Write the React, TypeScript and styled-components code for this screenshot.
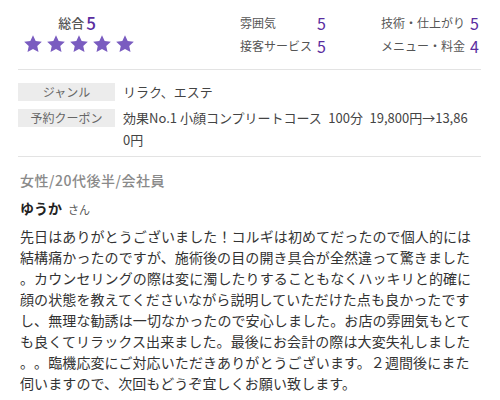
import styled, { createGlobalStyle } from 'styled-components';

const GlobalStyle = createGlobalStyle`
  html, body {
    margin: 0;
    padding: 0;
    background: #ffffff;
  }
  body {
    font-family: "Noto Sans CJK JP", "Noto Sans", sans-serif;
    color: #333333;
    text-spacing-trim: space-all;
  }
`;

const RATINGS = [
  { label: '雰囲気', value: 5 },
  { label: '技術・仕上がり', value: 5 },
  { label: '接客サービス', value: 5 },
  { label: 'メニュー・料金', value: 4 },
];

// 参照画面と同じ位置で改行する
const BODY_LINES = [
  '先日はありがとうございました！コルギは初めてだったので個人的には',
  '結構痛かったのですが、施術後の目の開き具合が全然違って驚きました',
  '。カウンセリングの際は変に濁したりすることもなくハッキリと的確に',
  '顔の状態を教えてくださいながら説明していただけた点も良かったです',
  'し、無理な勧誘は一切なかったので安心しました。お店の雰囲気もとて',
  'も良くてリラックス出来ました。最後にお会計の際は大変失礼しました',
  '。。臨機応変にご対応いただきありがとうございます。２週間後にまた',
  '伺いますので、次回もどうぞ宜しくお願い致します。',
];

const Star = () => (
  <svg width="20" height="20" viewBox="0 0 24 24">
    <polygon
      fill="#7a5cc0"
      points="12,1.5 15.2,8.3 22.6,9.2 17.1,14.3 18.6,21.7 12,18 5.4,21.7 6.9,14.3 1.4,9.2 8.8,8.3"
    />
  </svg>
);

const App = () => {
  return (
    <Page>
      <GlobalStyle />
      <TopRow>
        <ScoreBlock>
          <TotalLine>
            総合<TotalValue>5</TotalValue>
          </TotalLine>
          <Stars>
            {[0, 1, 2, 3, 4].map((i) => (
              <Star key={i} />
            ))}
          </Stars>
        </ScoreBlock>
        <RatingGrid>
          {RATINGS.map((r) => (
            <RatingItem key={r.label}>
              <RatingLabel>{r.label}</RatingLabel>
              <RatingValue>{r.value}</RatingValue>
            </RatingItem>
          ))}
        </RatingGrid>
      </TopRow>

      <InfoTable>
        <InfoRow>
          <InfoLabel>ジャンル</InfoLabel>
          <InfoValue>リラク、エステ</InfoValue>
        </InfoRow>
        <InfoRow>
          <InfoLabel>予約クーポン</InfoLabel>
          <InfoValue>
            効果No.1 小顔コンプリートコース{'\u2002'}100分{'\u2002'}19,800円→13,86
            <br />0円
          </InfoValue>
        </InfoRow>
      </InfoTable>

      <Review>
        <Meta>女性/20代後半/会社員</Meta>
        <Author>
          ゆうか<Honorific>さん</Honorific>
        </Author>
        <Body>
          {BODY_LINES.map((line, i) => (
            <BodyLine key={i}>{line}</BodyLine>
          ))}
        </Body>
      </Review>
    </Page>
  );
};

const Page = styled.div`
  width: 500px;
  height: 400px;
  overflow: hidden;
  padding: 0 19px 0 18px;
  box-sizing: border-box;
`;

const TopRow = styled.div`
  display: flex;
  height: 70px;
  box-sizing: border-box;
  border-bottom: 1px solid #e3e3e3;
`;

const ScoreBlock = styled.div`
  width: 118px;
  display: flex;
  flex-direction: column;
  align-items: center;
  padding-top: 11px;
`;

const TotalLine = styled.div`
  height: 22px;
  display: flex;
  align-items: center;
  font-size: 13px;
  color: #555555;
  font-weight: 500;
`;

const TotalValue = styled.span`
  margin-left: 2px;
  font-size: 17px;
  color: #5a2d9f;
`;

const Stars = styled.div`
  display: flex;
  gap: 3px;
  margin-top: 1px;
  margin-left: 3px;
  svg {
    display: block;
  }
`;

const RatingGrid = styled.div`
  margin-left: 104px;
  padding-top: 11px;
  display: grid;
  grid-template-columns: 141px auto;
  grid-auto-rows: 23px;
  align-content: start;
`;

const RatingItem = styled.div`
  display: flex;
  align-items: center;
  &:nth-child(odd) span:first-child {
    width: 77px;
  }
  &:nth-child(even) span:first-child {
    width: 89px;
  }
`;

const RatingLabel = styled.span`
  font-size: 12px;
  color: #555555;
  white-space: nowrap;
`;

const RatingValue = styled.span`
  font-size: 16px;
  color: #5a2d9f;
`;

const InfoTable = styled.div`
  display: flex;
  flex-direction: column;
  gap: 4px;
  padding: 11px 0 5px;
  border-bottom: 1px solid #e3e3e3;
`;

const InfoRow = styled.div`
  display: flex;
  gap: 8px;
`;

const InfoLabel = styled.div`
  flex: 0 0 97px;
  height: 18px;
  margin-top: 2px;
  background: #ececec;
  color: #666666;
  font-size: 12px;
  line-height: 18px;
  text-align: center;
`;

const InfoValue = styled.div`
  font-size: 13px;
  line-height: 22px;
  color: #444444;
  white-space: nowrap;
`;

const Review = styled.div`
  padding: 13px 0 0 2px;
`;

const Meta = styled.div`
  font-size: 14px;
  line-height: 20px;
  color: #8a8a8a;
  font-weight: 500;
  letter-spacing: 0.5px;
`;

const Author = styled.div`
  margin-top: 8px;
  font-size: 14px;
  line-height: 20px;
  font-weight: 700;
  color: #222222;
`;

const Honorific = styled.span`
  margin-left: 6px;
  font-size: 11px;
  font-weight: 400;
  color: #555555;
`;

const Body = styled.div`
  margin-top: 7px;
  font-size: 14px;
  line-height: 21px;
  color: #333333;
  letter-spacing: 0.1px;
`;

const BodyLine = styled.div`
  white-space: nowrap;
`;

export default App;
